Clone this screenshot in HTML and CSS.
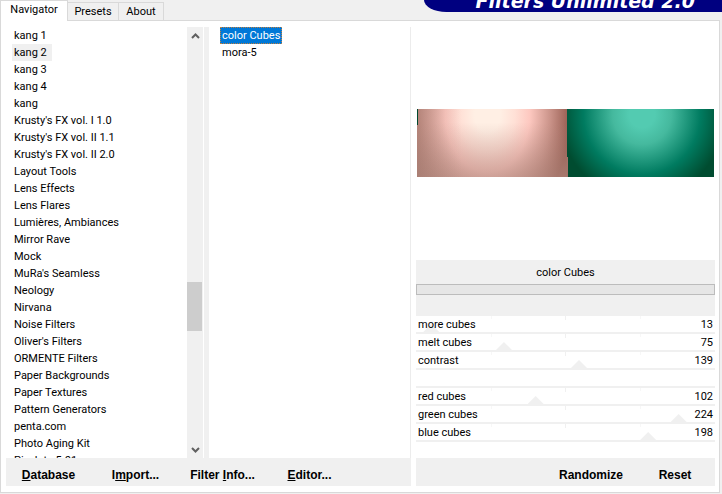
FILE: index.html
```html
<!DOCTYPE html>
<html lang="en">
<head>
    <meta charset="UTF-8">
    <meta name="viewport" content="width=device-width, initial-scale=1.0">
    <title>Filters Unlimited 2.0</title>
    <link rel="stylesheet" href="styles.css">
</head>
<body>
    <div class="window">
        <header class="top">
            <div class="tabs" role="tablist">
                <button type="button" class="tab active" role="tab" aria-selected="true">Navigator</button>
                <button type="button" class="tab" role="tab">Presets</button>
                <button type="button" class="tab" role="tab">About</button>
            </div>
            <div class="banner"><span class="banner-text">Filters Unlimited 2.0</span></div>
        </header>

        <main class="panel">
            <section class="browser">
                <div class="lists">
                    <div class="categories">
                        <ul class="list">
                            <li><button type="button" class="item">kang 1</button></li>
                            <li><button type="button" class="item current">kang 2</button></li>
                            <li><button type="button" class="item">kang 3</button></li>
                            <li><button type="button" class="item">kang 4</button></li>
                            <li><button type="button" class="item">kang</button></li>
                            <li><button type="button" class="item">Krusty's FX vol. I 1.0</button></li>
                            <li><button type="button" class="item">Krusty's FX vol. II 1.1</button></li>
                            <li><button type="button" class="item">Krusty's FX vol. II 2.0</button></li>
                            <li><button type="button" class="item">Layout Tools</button></li>
                            <li><button type="button" class="item">Lens Effects</button></li>
                            <li><button type="button" class="item">Lens Flares</button></li>
                            <li><button type="button" class="item">Lumières, Ambiances</button></li>
                            <li><button type="button" class="item">Mirror Rave</button></li>
                            <li><button type="button" class="item">Mock</button></li>
                            <li><button type="button" class="item">MuRa's Seamless</button></li>
                            <li><button type="button" class="item">Neology</button></li>
                            <li><button type="button" class="item">Nirvana</button></li>
                            <li><button type="button" class="item">Noise Filters</button></li>
                            <li><button type="button" class="item">Oliver's Filters</button></li>
                            <li><button type="button" class="item">ORMENTE Filters</button></li>
                            <li><button type="button" class="item">Paper Backgrounds</button></li>
                            <li><button type="button" class="item">Paper Textures</button></li>
                            <li><button type="button" class="item">Pattern Generators</button></li>
                            <li><button type="button" class="item">penta.com</button></li>
                            <li><button type="button" class="item">Photo Aging Kit</button></li>
                            <li><button type="button" class="item">Pixelate 5.01</button></li>
                        </ul>
                        <div class="scrollbar">
                            <button type="button" class="arrow" aria-label="Scroll up">
                                <svg width="9" height="6" viewBox="0 0 9 6"><path d="M1 5 L4.500 1.500 L8 5" /></svg>
                            </button>
                            <div class="track">
                                <div class="before"></div>
                                <div class="thumb"></div>
                                <div class="after"></div>
                            </div>
                            <button type="button" class="arrow" aria-label="Scroll down">
                                <svg width="9" height="6" viewBox="0 0 9 6"><path d="M1 1 L4.500 4.500 L8 1" /></svg>
                            </button>
                        </div>
                    </div>
                    <ul class="list effects">
                        <li><button type="button" class="item selected">color Cubes</button></li>
                        <li><button type="button" class="item">mora-5</button></li>
                    </ul>
                </div>
                <div class="actions">
                    <button type="button" class="action"><u>D</u>atabase</button>
                    <button type="button" class="action">I<u>m</u>port...</button>
                    <button type="button" class="action">Filter <u>I</u>nfo...</button>
                    <button type="button" class="action"><u>E</u>ditor...</button>
                </div>
            </section>

            <section class="settings">
                <div class="preview">
                    <div class="picture">
                        <div class="cube pink"></div>
                        <div class="cube green"></div>
                    </div>
                </div>

                <div class="filter-head">
                    <h1 class="filter-name">color Cubes</h1>
                    <div class="progress"></div>
                </div>

                <div class="sliders">
                    <div class="slider">
                        <label for="more">more cubes</label>
                        <output for="more">13</output>
                        <input type="range" id="more" min="0" max="255" value="13">
                    </div>
                    <div class="slider">
                        <label for="melt">melt cubes</label>
                        <output for="melt">75</output>
                        <input type="range" id="melt" min="0" max="255" value="75">
                    </div>
                    <div class="slider">
                        <label for="contrast">contrast</label>
                        <output for="contrast">139</output>
                        <input type="range" id="contrast" min="0" max="255" value="139">
                    </div>
                    <div class="slider empty"></div>
                    <div class="slider">
                        <label for="red">red cubes</label>
                        <output for="red">102</output>
                        <input type="range" id="red" min="0" max="255" value="102">
                    </div>
                    <div class="slider">
                        <label for="green">green cubes</label>
                        <output for="green">224</output>
                        <input type="range" id="green" min="0" max="255" value="224">
                    </div>
                    <div class="slider">
                        <label for="blue">blue cubes</label>
                        <output for="blue">198</output>
                        <input type="range" id="blue" min="0" max="255" value="198">
                    </div>
                </div>

                <div class="actions right">
                    <button type="button" class="action">Randomize</button>
                    <button type="button" class="action">Reset</button>
                </div>
            </section>
        </main>
    </div>
</body>
</html>
```

FILE: styles.css
```css
* {
    box-sizing: border-box;
}

body {
    margin: 0;
    background: #f0f0f0;
    color: #000;
    font-family: Roboto, "Liberation Sans", sans-serif;
    font-size: 11px;
    line-height: 18px;
}

button {
    padding: 0;
    border: none;
    background: none;
    color: inherit;
    font: inherit;
}

.window {
    display: flex;
    flex-direction: column;
    height: 100vh;
    padding: 0 2px 1px 0;
}

/* tabs and banner */

.top {
    display: flex;
    justify-content: space-between;
    height: 20px;
}

.tabs {
    display: flex;
    align-items: flex-end;
}

.tab {
    width: 51px;
    height: 18px;
    border: 1px solid #d9d9d9;
    border-width: 1px 1px 0 0;
}

.tab:last-child {
    width: 45px;
}

.tab.active {
    position: relative;
    width: 68px;
    height: 21px;
    margin-bottom: -1px;
    padding-bottom: 2px;
    border-left-width: 1px;
    background: #fff;
}

.banner {
    width: 298px;
    height: 12px;
    margin-right: -2px;
    overflow: hidden;
    background: #000080;
    border-bottom-left-radius: 26px 14px;
}

.banner-text {
    display: block;
    margin-top: -11px;
    padding-right: 27px;
    color: #fff;
    font-family: "DejaVu Sans", sans-serif;
    font-size: 19px;
    font-weight: bold;
    font-style: italic;
    line-height: 24px;
    text-align: right;
    white-space: nowrap;
}

.panel {
    display: flex;
    flex: 1;
    min-height: 0;
    padding: 6px 4px 6px 5px;
    border: 1px solid #d9d9d9;
    background: #fff;
}

/* category and effect lists */

.browser {
    display: flex;
    flex: 405;
    flex-direction: column;
    min-width: 0;
}

.lists {
    display: grid;
    flex: 1;
    grid-template-rows: minmax(0, 1fr);
    grid-template-columns: 203fr 201fr;
    min-height: 0;
    border-right: 1px solid #ececec;
}

.categories {
    display: flex;
    border-right: 5px solid #f0f0f0;
}

.list {
    flex: 1;
    margin: 0;
    padding: 0 6px;
    overflow: hidden;
    list-style: none;
}

.effects {
    padding: 0 11px;
}

.item {
    display: block;
    height: 17px;
    padding: 1px 2px 0;
    line-height: 16px;
    white-space: nowrap;
}

.item.current {
    padding-right: 5px;
    background: #f0f0f0;
}

.item.selected {
    outline: 1px dotted #c08040;
    outline-offset: -1px;
    background: #0078d7;
    color: #fff;
}

.scrollbar {
    display: flex;
    flex-direction: column;
    width: 16px;
    margin-right: 1px;
    background: #f0f0f0;
}

.arrow {
    display: flex;
    align-items: center;
    justify-content: center;
    height: 17px;
}

.arrow path {
    fill: none;
    stroke: #606060;
    stroke-width: 2;
}

.track {
    display: flex;
    flex: 1;
    flex-direction: column;
}

.before {
    flex: 237;
}

.thumb {
    flex: 49;
    margin-right: 1px;
    background: #cdcdcd;
}

.after {
    flex: 110;
}

/* bottom buttons */

.actions {
    display: flex;
    gap: 2px;
    height: 28px;
    background: #f0f0f0;
}

.action {
    width: 85px;
    padding-top: 6px;
    font-family: "Liberation Sans", Arial, sans-serif;
    font-size: 12px;
    font-weight: bold;
}

.actions.right {
    gap: 4px;
    justify-content: flex-end;
}

.right .action {
    width: 80px;
}

/* preview and sliders */

.settings {
    display: flex;
    flex: 299;
    flex-direction: column;
    min-width: 0;
    margin-left: 5px;
}

.preview {
    display: flex;
    flex: 1;
    align-items: center;
    padding: 0 1px 1px;
}

.picture {
    display: flex;
    flex: 1;
    height: 68px;
}

.cube {
    flex: 147;
}

.pink {
    flex: 150;
    background:
        linear-gradient(#00482e, #00482e) 0 0 / 1px 16px no-repeat,
        linear-gradient(to right, rgba(176, 140, 130, 0.4), transparent 30%),
        linear-gradient(to bottom, transparent 20%, rgba(180, 140, 130, 0.6)),
        radial-gradient(92px 125px at 47% 8%, #ffefe4 14%, #ffe0d6 30%, #fdc8c0 46%, #cb948a 68%, #945a4e 90%);
}

.green {
    background:
        linear-gradient(#a5736a, #a5736a) 0 100% / 1px 20px no-repeat,
        radial-gradient(86px 88px at 51% 8%, #53cbb1 15%, #45b99e 34%, #007b60 68%, #004c30 96%);
}

.filter-head {
    height: 56px;
    padding-top: 4px;
    background: #f0f0f0;
}

.filter-name {
    margin: 0 0 2px;
    font-size: 11px;
    font-weight: normal;
    text-align: center;
}

.progress {
    height: 11px;
    border: 1px solid #bcbcbc;
    background: #e6e6e6;
}

.sliders {
    margin-bottom: 16px;
}

.slider {
    position: relative;
    display: flex;
    justify-content: space-between;
    height: 18px;
    padding: 0 2px;
    overflow: hidden;
    border-bottom: 2px solid #f0f0f0;
}

/* the slider covers the whole row so the pointer can reach both ends */
.slider input {
    position: absolute;
    bottom: 0;
    left: -8px;
    width: calc(100% + 16px);
    height: 8px;
    margin: 0;
    -webkit-appearance: none;
    appearance: none;
    background: none;
}

.slider input::-webkit-slider-thumb {
    -webkit-appearance: none;
    width: 16px;
    height: 8px;
    background: #f0f0f0;
    clip-path: polygon(50% 0, 100% 100%, 0 100%);
}

/* quarter marks */
.slider:not(.empty) {
    background:
        linear-gradient(#f7f7f7, #f7f7f7) 25% 0 / 1px 3px no-repeat,
        linear-gradient(#f0f0f0, #f0f0f0) 50% 0 / 1px 4px no-repeat,
        linear-gradient(#f7f7f7, #f7f7f7) 75% 0 / 1px 3px no-repeat;
}

.slider label,
.slider output {
    position: relative;
    z-index: 1;
}
```
